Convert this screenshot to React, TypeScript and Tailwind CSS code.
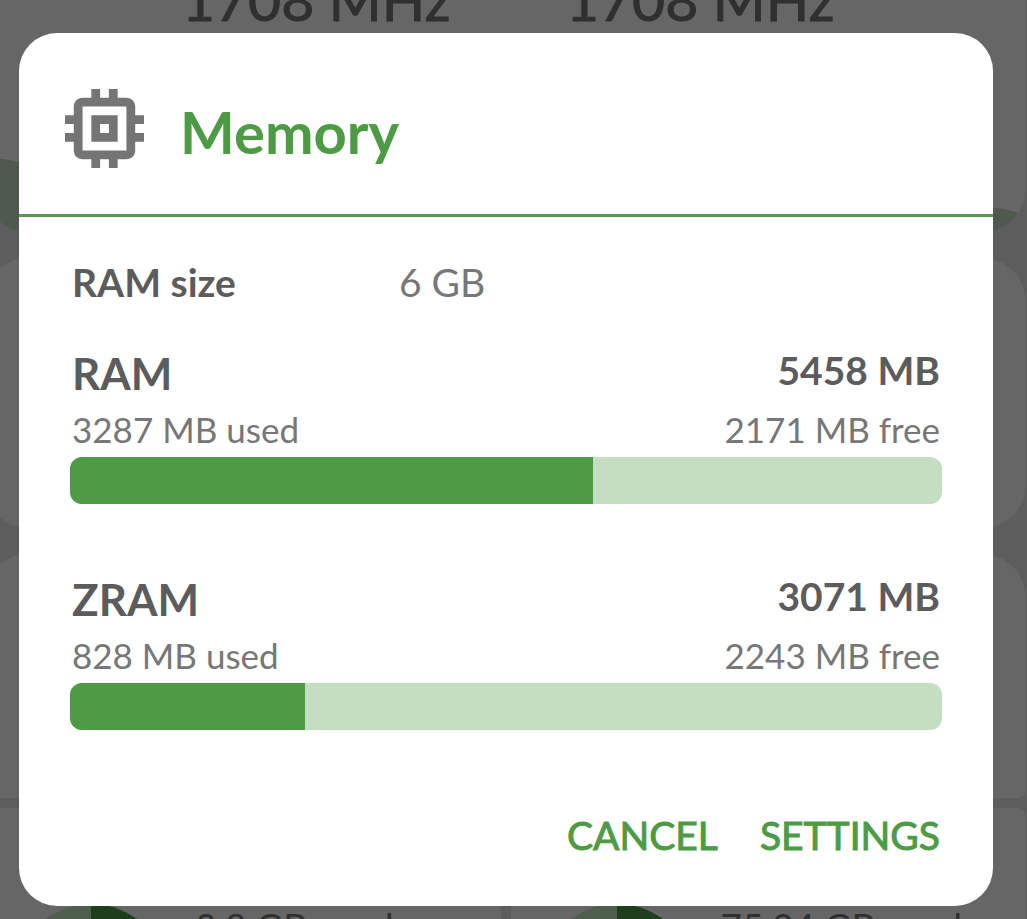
type Usage = {
  name: string;
  total: number;
  used: number;
};

const usages: Usage[] = [
  { name: "RAM", total: 5458, used: 3287 },
  { name: "ZRAM", total: 3071, used: 828 },
];

function MemoryIcon() {
  return (
    <svg viewBox="3 3 18 18" className="size-[79px] shrink-0 fill-[#757575]" aria-hidden="true">
      <path d="M15 9H9v6h6V9zm-2 4h-2v-2h2v2zm8-2V9h-2V7c0-1.1-.9-2-2-2h-2V3h-2v2h-2V3H9v2H7c-1.1 0-2 .9-2 2v2H3v2h2v2H3v2h2v2c0 1.1.9 2 2 2h2v2h2v-2h2v2h2v-2h2c1.1 0 2-.9 2-2v-2h2v-2h-2v-2h2zm-4 6H7V7h10v10z" />
    </svg>
  );
}

function StorageCard({ label }: { label: string }) {
  return (
    <div className="flex h-[200px] flex-1 items-start gap-[26px] rounded-lg bg-[#666666] pl-[28px] pt-24">
      <svg viewBox="0 0 156 156" className="size-[156px] shrink-0" aria-hidden="true">
        <path d="M78 0a78 78 0 0 0 0 156z" fill="#4f5f4d" />
        <path d="M78 0a78 78 0 0 1 0 156z" fill="#1e3f1b" />
      </svg>
      <span className="whitespace-nowrap text-[37px] leading-[44px] text-[#303030]">{label}</span>
    </div>
  );
}

function Dashboard() {
  return (
    <div className="absolute inset-0 overflow-hidden bg-[#5d5d5d]" aria-hidden="true">
      <div className="-ml-4 mr-px flex flex-col">
        <div className="relative h-[232px] overflow-hidden rounded-b-[44px] bg-[#666666]">
          <div className="-mt-8 flex pl-[198px] text-[57px] leading-[62px] text-[#303030] [-webkit-text-stroke:1px]">
            <span className="w-[384px] shrink-0">1708 MHz</span>
            <span className="shrink-0">1708 MHz</span>
          </div>
          <svg
            viewBox="0 0 1042 74"
            preserveAspectRatio="none"
            className="absolute bottom-0 left-0 h-[74px] w-full"
          >
            <path d="M0 0Q20 0 35 4C300 60 800 48 1008 50Q1020 49 1042 58V74H0z" fill="#50594f" />
          </svg>
        </div>
        <div className="mt-[26px] h-[270px] rounded-[44px] bg-[#666666]" />
        <div className="mt-[26px] h-[244px] rounded-b-lg rounded-t-[44px] bg-[#666666]" />
        <div className="mt-[10px] flex gap-[10px]">
          <div className="flex flex-1 pl-px">
            <StorageCard label="3.8 GB used" />
          </div>
          <div className="flex flex-1">
            <StorageCard label="75.04 GB used" />
          </div>
        </div>
      </div>
    </div>
  );
}

function UsageMeter({ name, total, used }: Usage) {
  return (
    <section>
      <div className="flex items-start justify-between px-0.5 text-[#5c5c5c]">
        <h3 className="text-[44px] font-bold leading-[56px]">{name}</h3>
        <span className="text-[39px] font-bold leading-[50px]">{total} MB</span>
      </div>
      <div className="mt-1 flex justify-between px-0.5 text-[35px] leading-[48px] text-[#777777]">
        <span>{used} MB used</span>
        <span>{total - used} MB free</span>
      </div>
      <div
        role="progressbar"
        aria-label={name}
        aria-valuenow={used}
        aria-valuemin={0}
        aria-valuemax={total}
        className="mt-1 h-[47px] overflow-hidden rounded-xl bg-[#c3dec0]"
      >
        <div className="h-full bg-[#4e9b45]" style={{ width: `${Math.round((used / total) * 100)}%` }} />
      </div>
    </section>
  );
}

export default function App() {
  return (
    <main className="relative min-h-screen overflow-hidden font-['Lato',sans-serif]">
      <Dashboard />
      <div className="relative pb-[13px] pl-[19px] pr-[34px] pt-[33px]">
        <div role="dialog" aria-labelledby="dialog-title" className="rounded-[38px] bg-white">
          <header className="flex items-start gap-[36px] border-b-[3px] border-[#559a4f] pb-[46px] pl-[46px] pr-[51px] pt-[56px]">
            <MemoryIcon />
            <h2 id="dialog-title" className="pt-[7px] text-[58px] font-bold leading-[72px] text-[#4e9b45]">
              Memory
            </h2>
          </header>
          <div className="px-[51px] pb-[46px] pt-[40px]">
            <dl className="flex px-0.5 text-[39px] leading-[50px]">
              <dt className="w-[327px] font-bold text-[#5c5c5c]">RAM size</dt>
              <dd className="text-[#777777]">6 GB</dd>
            </dl>
            <div className="mt-[38px] flex flex-col gap-[67px]">
              {usages.map((usage) => (
                <UsageMeter key={usage.name} {...usage} />
              ))}
            </div>
            <div className="mt-[80px] flex justify-end gap-[42px] px-0.5 text-[39px] leading-[50px] text-[#4e9b45] [-webkit-text-stroke:1px]">
              <button type="button">CANCEL</button>
              <button type="button">SETTINGS</button>
            </div>
          </div>
        </div>
      </div>
    </main>
  );
}
